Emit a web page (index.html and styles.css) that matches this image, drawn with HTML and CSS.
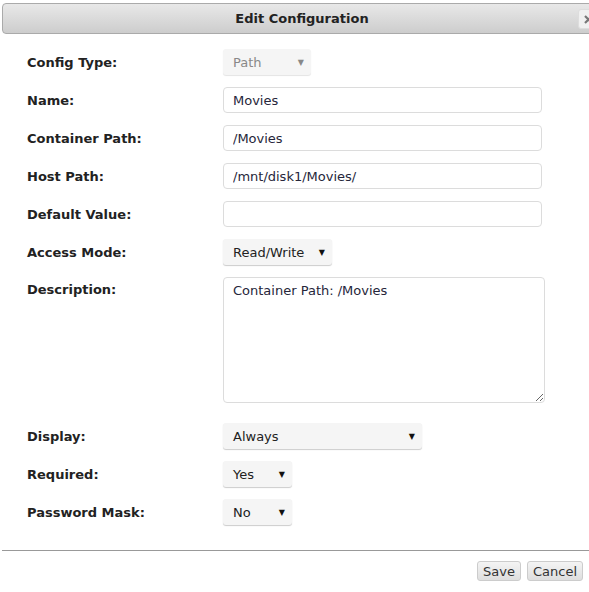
FILE: index.html
```html
<!DOCTYPE html>
<html lang="en">
  <head>
    <meta charset="UTF-8" />
    <title>Edit Configuration</title>
    <link rel="stylesheet" href="styles.css">
  </head>
  <body>
    <div class="dialog">
      <div class="titlebar">
        <span class="title">Edit Configuration</span>
        <a href="javascript:;" class="close">
          <svg width="9" height="9" viewBox="0 0 9 9"><path d="M1 1L8 8M8 1L1 8" stroke="#777" stroke-width="2.2" /></svg>
        </a>
      </div>
      <div class="content">
        <label>Config Type:</label>
        <div class="select disabled w-path"><span>Path</span><i>&#9660;</i></div>

        <label>Name:</label>
        <input class="text" type="text" value="Movies" />

        <label>Container Path:</label>
        <input class="text" type="text" value="/Movies" />

        <label>Host Path:</label>
        <input class="text" type="text" value="/mnt/disk1/Movies/" />

        <label>Default Value:</label>
        <input class="text" type="text" value="" />

        <label>Access Mode:</label>
        <div class="select w-mode"><span>Read/Write</span><i>&#9660;</i></div>

        <label class="top">Description:</label>
        <textarea class="desc">Container Path: /Movies</textarea>

        <label>Display:</label>
        <div class="select w-display"><span>Always</span><i>&#9660;</i></div>

        <label>Required:</label>
        <div class="select w-small"><span>Yes</span><i>&#9660;</i></div>

        <label>Password Mask:</label>
        <div class="select w-small"><span>No</span><i>&#9660;</i></div>
      </div>
      <div class="buttons">
        <button>Save</button>
        <button>Cancel</button>
      </div>
    </div>
  </body>
</html>
```

FILE: styles.css
```css
* {
  margin: 0;
  padding: 0;
  box-sizing: border-box;
}
body {
  background: #fff;
  font-family: "DejaVu Sans", Verdana, sans-serif;
  font-size: 13px;
  color: #222;
  overflow: hidden;
}
.dialog {
  width: 600px;
  margin: 3px 0 0 2px;
  position: relative;
}
.titlebar {
  height: 31px;
  border: 1px solid #aaa;
  border-radius: 4px;
  background: linear-gradient(#e8e8e8, #cdcdcd);
  display: flex;
  align-items: center;
  justify-content: center;
}
.title {
  font-weight: bold;
  color: #222;
}
.close {
  position: absolute;
  left: 576px;
  top: 6px;
  width: 20px;
  height: 20px;
  border: 1px solid #ddd;
  border-radius: 3px;
  background: #f0f0f0;
  display: flex;
  align-items: center;
  justify-content: center;
}
.content {
  display: grid;
  grid-template-columns: 196px 1fr;
  row-gap: 12px;
  align-items: center;
  padding: 15px 0 0 25px;
}
.content label {
  font-weight: bold;
  color: #222;
}
.content label.top {
  align-self: start;
  padding-top: 5px;
}
.text {
  width: 319px;
  height: 26px;
  border: 1px solid #dcdcdc;
  border-radius: 4px;
  padding: 0 9px;
  font-family: inherit;
  font-size: 13px;
  color: #26263a;
  background: #fff;
}
.desc {
  width: 322px;
  height: 126px;
  border: 1px solid #dcdcdc;
  border-radius: 4px;
  padding: 5px 9px;
  font-family: inherit;
  font-size: 13px;
  color: #26263a;
  resize: both;
  margin-bottom: 8px;
}
.select {
  height: 26px;
  background: #f5f5f5;
  border-radius: 3px;
  box-shadow: 0 1px 1px #ccc;
  display: flex;
  align-items: center;
  justify-content: space-between;
  padding: 0 7px 0 10px;
  color: #222;
}
.select i {
  font-style: normal;
  font-size: 8px;
  color: #111;
}
.select.disabled {
  color: #888;
  box-shadow: 0 1px 1px #e4e4e4;
}
.select.disabled i {
  color: #888;
}
.w-path {
  width: 88px;
}
.w-mode {
  width: 109px;
}
.w-display {
  width: 199px;
}
.w-small {
  width: 69px;
}
.buttons {
  margin-top: 25px;
  border-top: 1px solid #999;
  display: flex;
  justify-content: flex-end;
  gap: 6px;
  padding: 10px 19px 0 0;
}
.buttons button {
  font-family: inherit;
  font-size: 13px;
  color: #333;
  height: 20px;
  padding: 0 5px;
  border: 1px solid #ccc;
  border-radius: 3px;
  background: linear-gradient(#f4f4f4, #dedede);
}
```
